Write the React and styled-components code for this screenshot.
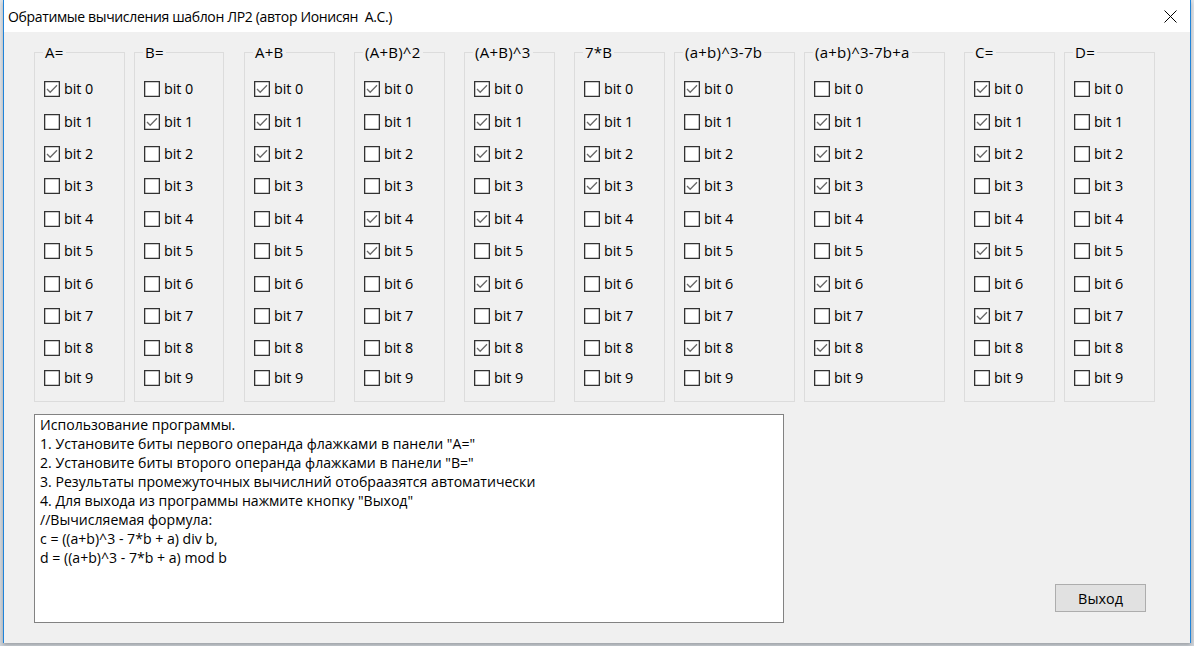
import React from "react";
import styled, { createGlobalStyle } from "styled-components";

const Global = createGlobalStyle`
  html, body { margin: 0; padding: 0; }
  body {
    width: 1194px; height: 646px; overflow: hidden;
    background: #d6dbe2;
    font-family: "Open Sans", "Noto Sans", sans-serif;
  }
`;

const Screen = styled.div`
  width: 1194px;
  height: 646px;
  display: flex;
  align-items: flex-start;
  padding-left: 3px;
  box-sizing: border-box;
  background: linear-gradient(#dfe3e8, #cfd4da);
`;

const Window = styled.div`
  width: 1188px;
  height: 643px;
  box-sizing: border-box;
  border-left: 1px solid #1f83d9;
  border-right: 1px solid #1f83d9;
  display: flex;
  flex-direction: column;
  background: #f0f0f0;
  box-shadow: 0 2px 4px rgba(0,0,0,0.25);
`;

const TitleBar = styled.div`
  height: 32px;
  flex: none;
  background: #ffffff;
  display: flex;
  align-items: center;
  justify-content: space-between;
  padding-left: 4px;
`;

const Title = styled.div`
  font-size: 14px;
  color: #000;
  white-space: pre;
  letter-spacing: -0.35px;
  margin-top: 1px;
`;

const CloseBtn = styled.div`
  height: 32px;
  display: flex;
  align-items: center;
  padding-right: 13px;
`;

const Body = styled.div`
  flex: 1;
  display: flex;
  flex-direction: column;
  padding: 20px 0 0 30px;
`;

const Panels = styled.div`
  display: flex;
  align-items: flex-start;
`;

const Group = styled.div`
  position: relative;
  width: ${(p) => p.$w}px;
  margin-left: ${(p) => p.$ml}px;
  height: 350px;
  box-sizing: border-box;
  border: 1px solid #dcdcdc;
  padding: 20px 0 0 9px;
  display: flex;
  flex-direction: column;
`;

const GroupLabel = styled.span`
  position: absolute;
  top: -11px;
  left: 8px;
  padding: 0 2px;
  background: #f0f0f0;
  font-size: 15px;
  line-height: 20px;
  color: #000;
  letter-spacing: 0.25px;
  white-space: nowrap;
`;

const Row = styled.div`
  height: 32.4px;
  display: flex;
  align-items: center;
  gap: 4px;
  &:last-child { height: 27px; }
`;

const Box = styled.span`
  width: 16px;
  height: 16px;
  box-sizing: border-box;
  border: 1px solid #333333;
  box-shadow: inset 0 0 0 0.3px #333;
  background: #ffffff;
  display: flex;
  align-items: center;
  justify-content: center;
  flex: none;
`;

const BitText = styled.span`
  font-size: 14.4px;
  color: #000;
  letter-spacing: -0.1px;
  margin-top: -1px;
`;

const Bottom = styled.div`
  display: flex;
  align-items: flex-end;
  margin-top: 12px;
  width: 1121px;
`;

const Memo = styled.div`
  width: 750px;
  height: 209px;
  box-sizing: border-box;
  border: 1px solid #828282;
  background: #ffffff;
  padding: 0 5px;
  font-size: 14.1px;
  line-height: 19px;
  color: #000;
  letter-spacing: 0;
  white-space: pre;
`;

const Button = styled.div`
  width: 91px;
  height: 28px;
  box-sizing: border-box;
  margin-left: auto;
  margin-right: 9px;
  margin-bottom: 11px;
  border: 1px solid #adadad;
  background: #e1e1e1;
  display: flex;
  align-items: center;
  justify-content: center;
  font-size: 14.4px;
  color: #000;
`;

const Check = () => (
  <svg width="14" height="14" viewBox="0 0 14 14">
    <polyline points="2,7 5.2,10.3 12,3.2" fill="none" stroke="#6a6a6a" strokeWidth="1.3" />
  </svg>
);

const groups = [
  { label: "A=", w: 91, ml: 0, on: [0, 2] },
  { label: "B=", w: 90, ml: 9, on: [1] },
  { label: "A+B", w: 91, ml: 20, on: [0, 1, 2] },
  { label: "(A+B)^2", w: 91, ml: 19, on: [0, 4, 5] },
  { label: "(A+B)^3", w: 91, ml: 19, on: [0, 1, 2, 4, 6, 8] },
  { label: "7*B", w: 91, ml: 19, on: [1, 2, 3] },
  { label: "(a+b)^3-7b", w: 121, ml: 9, on: [0, 3, 6, 8] },
  { label: "(a+b)^3-7b+a", w: 141, ml: 9, on: [1, 2, 3, 6, 8] },
  { label: "C=", w: 91, ml: 19, on: [0, 1, 2, 5, 7] },
  { label: "D=", w: 91, ml: 9, on: [] },
];

const memoText = `Использование программы.
1. Установите биты первого операнда флажками в панели "A="
2. Установите биты второго операнда флажками в панели "B="
3. Результаты промежуточных вычислний отобраазятся автоматически
4. Для выхода из программы нажмите кнопку "Выход"
//Вычисляемая формула:
c = ((a+b)^3 - 7*b + a) div b,
d = ((a+b)^3 - 7*b + a) mod b`;

export default function App() {
  return (
    <>
      <Global />
      <Screen>
        <Window>
          <TitleBar>
            <Title>Обратимые вычисления шаблон ЛР2 (автор Ионисян  А.С.)</Title>
            <CloseBtn>
              <svg width="13" height="13" viewBox="0 0 13 13">
                <path d="M0.5 0.5 L12.5 12.5 M12.5 0.5 L0.5 12.5" stroke="#000" strokeWidth="1" />
              </svg>
            </CloseBtn>
          </TitleBar>
          <Body>
            <Panels>
              {groups.map((g) => (
                <Group key={g.label} $w={g.w} $ml={g.ml}>
                  <GroupLabel>{g.label}</GroupLabel>
                  {Array.from({ length: 10 }, (_, i) => (
                    <Row key={i}>
                      <Box>{g.on.includes(i) && <Check />}</Box>
                      <BitText>bit {i}</BitText>
                    </Row>
                  ))}
                </Group>
              ))}
            </Panels>
            <Bottom>
              <Memo>{memoText}</Memo>
              <Button>Выход</Button>
            </Bottom>
          </Body>
        </Window>
      </Screen>
    </>
  );
}
